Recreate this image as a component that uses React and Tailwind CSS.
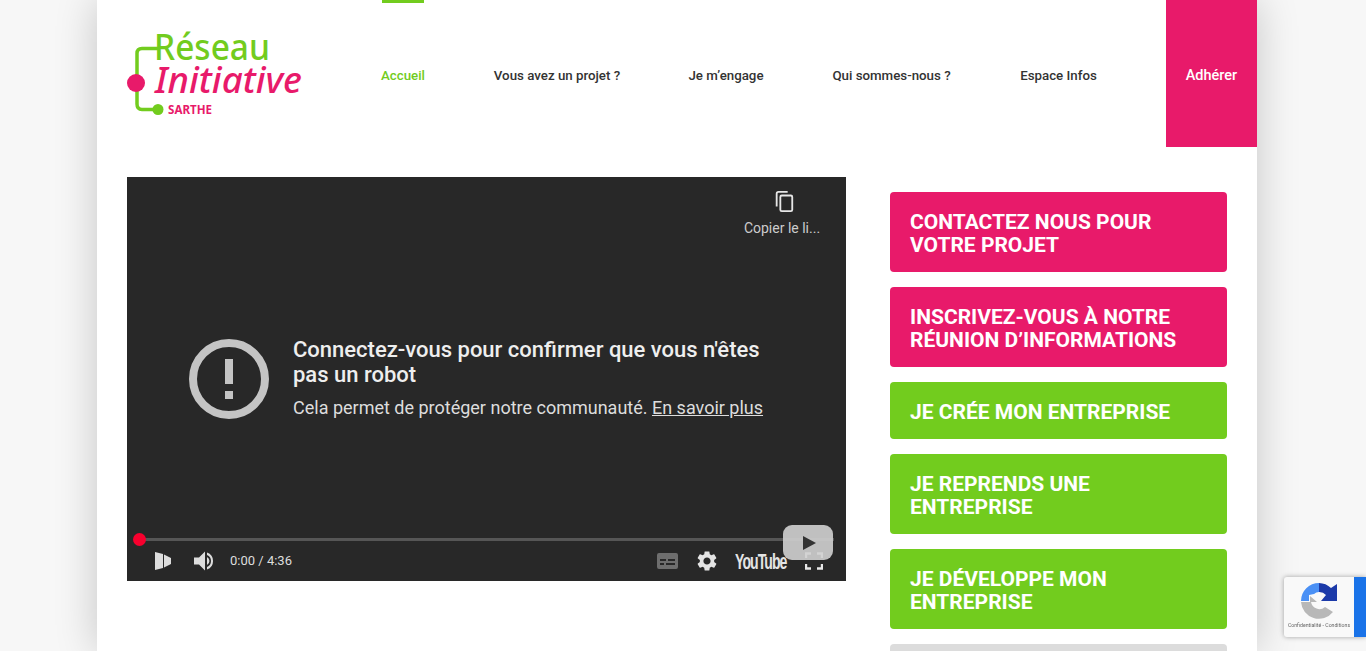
const NAV = [
  { label: "Accueil", w: "w-[42px]", active: true },
  { label: "Vous avez un projet ?", w: "w-[126px]" },
  { label: "Je m’engage", w: "w-[72px]" },
  { label: "Qui sommes-nous ?", w: "w-[119px]" },
  { label: "Espace Infos", w: "w-[75px]" },
];

const BUTTONS = [
  { lines: ["CONTACTEZ NOUS POUR", "VOTRE PROJET"], color: "bg-[#e81a6a]" },
  { lines: ["INSCRIVEZ-VOUS À NOTRE", "RÉUNION D’INFORMATIONS"], color: "bg-[#e81a6a]" },
  { lines: ["JE CRÉE MON ENTREPRISE"], color: "bg-[#72cc1e]" },
  { lines: ["JE REPRENDS UNE", "ENTREPRISE"], color: "bg-[#72cc1e]" },
  { lines: ["JE DÉVELOPPE MON", "ENTREPRISE"], color: "bg-[#72cc1e]" },
];

const GEAR =
  "M19.14 12.94c.04-.3.06-.61.06-.94 0-.32-.02-.64-.07-.94l2.03-1.58c.18-.14.23-.41.12-.61l-1.92-3.32c-.12-.22-.37-.29-.59-.22l-2.39.96c-.5-.38-1.03-.7-1.62-.94l-.36-2.54c-.04-.24-.24-.41-.48-.41h-3.84c-.24 0-.43.17-.47.41l-.36 2.54c-.59.24-1.13.57-1.62.94l-2.39-.96c-.22-.08-.47 0-.59.22L2.74 8.87c-.12.21-.08.47.12.61l2.03 1.58c-.05.3-.09.63-.09.94s.02.64.07.94l-2.03 1.58c-.18.14-.23.41-.12.61l1.92 3.32c.12.22.37.29.59.22l2.39-.96c.5.38 1.03.7 1.62.94l.36 2.54c.05.24.24.41.48.41h3.84c.24 0 .44-.17.47-.41l.36-2.54c.59-.24 1.13-.56 1.62-.94l2.39.96c.22.08.47 0 .59-.22l1.92-3.32c.12-.22.07-.47-.12-.61l-2.01-1.58zM12 15.6c-1.98 0-3.6-1.62-3.6-3.6s1.62-3.6 3.6-3.6 3.6 1.62 3.6 3.6-1.62 3.6-3.6 3.6z";

function Logo() {
  return (
    <svg width="180" height="90" viewBox="0 0 180 90" className="block overflow-visible">
      <path d="M32 18.5 H15 Q10 18.5 10 23.5 V74 Q10 79.5 15 79.5 H31" fill="none" stroke="#72cc1e" strokeWidth="3.5" />
      <circle cx="9" cy="53" r="9" fill="#e81a6a" />
      <circle cx="31" cy="79.5" r="5.5" fill="#72cc1e" />
      <text x="27" y="30" fontFamily="Noto Sans, sans-serif" fontSize="36" fontWeight="500" fill="#72cc1e" textLength="116" lengthAdjust="spacingAndGlyphs">Réseau</text>
      <text x="28" y="63" fontFamily="Noto Sans, sans-serif" fontSize="36" fontStyle="italic" fontWeight="500" fill="#e81a6a" textLength="147" lengthAdjust="spacingAndGlyphs">Initiative</text>
      <text x="41" y="84" fontFamily="Noto Sans, sans-serif" fontSize="12.5" fontWeight="700" fill="#e81a6a" textLength="44" lengthAdjust="spacingAndGlyphs">SARTHE</text>
    </svg>
  );
}

function Header() {
  return (
    <div className="flex h-[147px] pl-[30px]">
      <div className="w-[255px] pt-[30px]">
        <Logo />
      </div>
      <div className="flex gap-[70px]">
        {NAV.map((item) => (
          <a
            key={item.label}
            className={`flex justify-center whitespace-nowrap border-t-[3px] pt-[64px] text-[13.3px] leading-[17px] font-medium ${item.w} ${
              item.active ? "border-[#72cc1e] text-[#72cc1e]" : "border-transparent text-[#333]"
            }`}
          >
            {item.label}
          </a>
        ))}
      </div>
      <a className="ml-auto flex h-[147px] w-[91px] justify-center bg-[#e81a6a] pt-[67px] text-[14.5px] leading-[17px] font-medium text-white">
        Adhérer
      </a>
    </div>
  );
}

function PlayerControls() {
  return (
    <div className="flex h-[40px] items-center pl-[28px] pr-[23px] text-[13px] text-[#ddd]">
      <svg width="17" height="20" viewBox="0 0 17 20" fill="#ddd">
        <path d="M0 1 L8 3 V17 L0 19 Z M9 3.5 L16 7 V13 L9 16.5 Z" />
      </svg>
      <svg width="24" height="24" viewBox="0 0 24 24" fill="#ddd" className="ml-[21px]">
        <path d="M1 8.5 H6 L12 2.5 V21.5 L6 15.5 H1 Z" />
        <path d="M14 8 A4.5 4.5 0 0 1 14 16 Z" />
        <path d="M14 3.5 A9 9 0 0 1 14 20.5 V18 A6.5 6.5 0 0 0 14 6 Z" />
      </svg>
      <span className="ml-[13px]">0:00 / 4:36</span>
      <div className="ml-auto flex items-center">
        <svg width="21" height="18" viewBox="0 0 21 18" fill="#6e6e6e">
          <path fillRule="evenodd" d="M2 1 H19 Q21 1 21 3 V15 Q21 17 19 17 H2 Q0 17 0 15 V3 Q0 1 2 1 Z M3 7 V9 H9 V7 Z M11 7 V9 H18 V7 Z M3 11 V13 H7 V11 Z M9 11 V13 H18 V11 Z" />
        </svg>
        <svg width="24" height="24" viewBox="0 0 24 24" fill="#e4e4e4" className="ml-[17px]">
          <path d={GEAR} />
        </svg>
        <span className="ml-[16px] w-[52px] origin-left scale-x-[0.64] whitespace-nowrap font-['Liberation_Sans',sans-serif] text-[22px] font-bold tracking-[-1.5px] text-[#e4e4e4]">
          YouTube
        </span>
        <svg width="18" height="18" viewBox="0 0 18 18" fill="none" stroke="#e8e8e8" strokeWidth="2.4" className="ml-[18px]">
          <path d="M1 6 V1.5 H6 M12 1.5 H17 V6 M1 12 V16.5 H6 M12 16.5 H17 V12" />
        </svg>
      </div>
    </div>
  );
}

function Video() {
  return (
    <div className="relative flex h-[404px] w-[719px] flex-col bg-[#282828] font-['Roboto',sans-serif]">
      <div className="flex justify-end pr-[26px] pt-[13px]">
        <div className="flex w-[76px] flex-col items-center text-[14px] leading-[20px] text-[#ccc]">
          <svg width="22" height="22" viewBox="0 0 24 24" fill="none" stroke="#e6e6e6" strokeWidth="2" className="ml-[3px]">
            <path d="M4 18 V4 Q4 2 6 2 H16" />
            <rect x="8" y="6" width="13" height="17" rx="1.5" />
          </svg>
          <span className="mt-[6px] whitespace-nowrap">Copier le li...</span>
        </div>
      </div>

      <div className="flex flex-1 items-start pl-[62px] pt-[101px]">
        <svg width="80" height="80" viewBox="0 0 80 80" className="shrink-0">
          <circle cx="40" cy="40" r="36" fill="none" stroke="#c4c4c4" strokeWidth="8" />
          <rect x="36" y="20" width="8" height="25" fill="#c4c4c4" />
          <rect x="36" y="52" width="8" height="8" fill="#c4c4c4" />
        </svg>
        <div className="ml-[24px] mt-[-2px]">
          <div className="w-[490px] text-[22px] leading-[25px] font-medium text-[#eee]">
            Connectez-vous pour confirmer que vous n'êtes pas un robot
          </div>
          <div className="mt-[9px] text-[18px] leading-[24px] text-[#ddd]">
            Cela permet de protéger notre communauté. <span className="underline">En savoir plus</span>
          </div>
        </div>
      </div>

      <div className="px-[12px]">
        <div className="relative h-[3px] bg-[#565656]">
          <div className="absolute left-[-6px] top-[-5px] h-[13px] w-[13px] rounded-full bg-[#f8002e]" />
        </div>
      </div>
      <PlayerControls />

      <div className="absolute bottom-[21px] right-[13px] flex h-[35px] w-[50px] items-center justify-center rounded-[9px] bg-[#d0d0d0]/90">
        <div className="ml-[2px] h-0 w-0 border-y-[7px] border-l-[13px] border-y-transparent border-l-[#333]" />
      </div>
    </div>
  );
}

function Sidebar() {
  return (
    <div className="flex w-[337px] flex-col gap-[15px] pt-[15px]">
      {BUTTONS.map((b) => (
        <a
          key={b.lines[0]}
          className={`block rounded-[4px] px-[20px] pb-[15px] pt-[19px] text-[21px] font-bold leading-[23px] text-white ${b.color}`}
        >
          {b.lines.map((l) => (
            <div key={l} className="whitespace-nowrap">{l}</div>
          ))}
        </a>
      ))}
      <div className="h-[57px] shrink-0 rounded-[4px] bg-[#dcdcdc]" />
    </div>
  );
}

function Recaptcha() {
  return (
    <div className="fixed right-0 top-[577px] flex h-[60px] w-[82px] overflow-hidden rounded-l-[3px] bg-[#f9f9f9] shadow-[0_0_5px_rgba(0,0,0,0.35)]">
      <div className="flex w-[70px] flex-col items-center pt-[6px]">
        <svg width="38" height="38" viewBox="0 0 38 38" fill="none">
          <path d="M1 18 A18 18 0 0 1 19 0 V9 A9 9 0 0 0 14 11 L9 12 V18 Z" fill="#4a90f5" />
          <path d="M19 0 A18 18 0 0 1 31 5 L37 1 V18 H21 L26 12 A9 9 0 0 0 19 9 Z" fill="#1c3aa9" />
          <path d="M1 19 H10 V13 L17 19 H11 A8.5 8.5 0 0 0 25 24 L33 29 A18 18 0 0 1 1 19 Z" fill="#b8b8b8" />
        </svg>
        <span className="mt-[1px] whitespace-nowrap font-['Roboto',sans-serif] text-[5.2px] text-[#666]">Confidentialité - Conditions</span>
      </div>
      <div className="flex-1 bg-[#1a73e8]" />
    </div>
  );
}

export default function App() {
  return (
    <div className="h-screen overflow-hidden bg-[#f7f7f7] font-['Roboto',sans-serif]">
      <div className="ml-[97px] h-full w-[1160px] bg-white shadow-[0_0_40px_rgba(0,0,0,0.2)]">
        <Header />
        <div className="flex justify-between px-[30px] pt-[30px]">
          <Video />
          <Sidebar />
        </div>
      </div>
      <Recaptcha />
    </div>
  );
}
